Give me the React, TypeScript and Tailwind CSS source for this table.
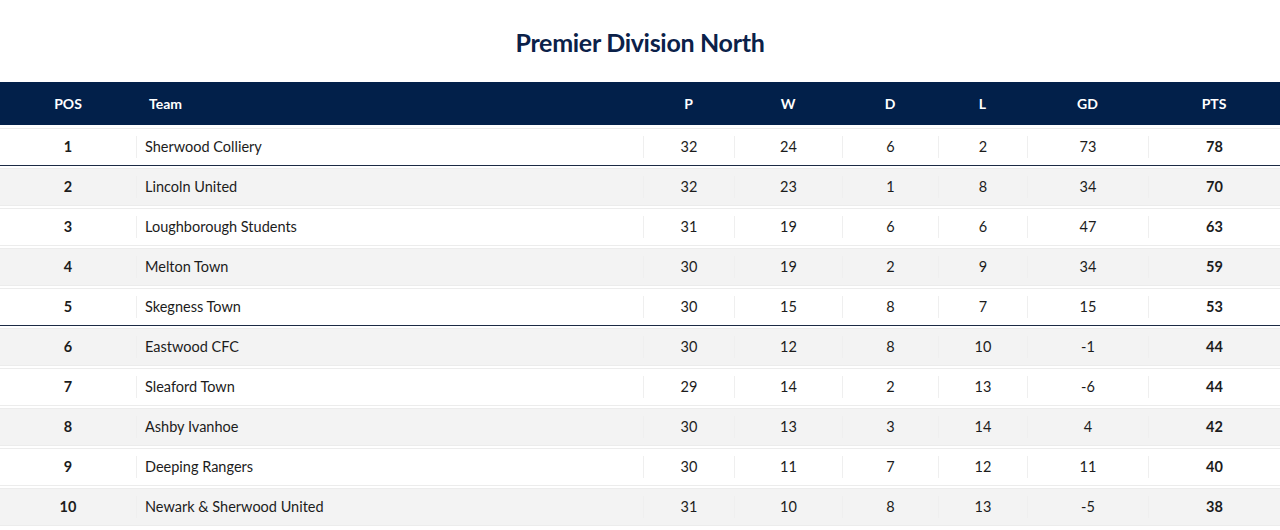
import React from "react";

const rows = [
  { pos: 1, team: "Sherwood Colliery", p: 32, w: 24, d: 6, l: 2, gd: 73, pts: 78, line: true },
  { pos: 2, team: "Lincoln United", p: 32, w: 23, d: 1, l: 8, gd: 34, pts: 70 },
  { pos: 3, team: "Loughborough Students", p: 31, w: 19, d: 6, l: 6, gd: 47, pts: 63 },
  { pos: 4, team: "Melton Town", p: 30, w: 19, d: 2, l: 9, gd: 34, pts: 59 },
  { pos: 5, team: "Skegness Town", p: 30, w: 15, d: 8, l: 7, gd: 15, pts: 53, line: true },
  { pos: 6, team: "Eastwood CFC", p: 30, w: 12, d: 8, l: 10, gd: -1, pts: 44 },
  { pos: 7, team: "Sleaford Town", p: 29, w: 14, d: 2, l: 13, gd: -6, pts: 44 },
  { pos: 8, team: "Ashby Ivanhoe", p: 30, w: 13, d: 3, l: 14, gd: 4, pts: 42 },
  { pos: 9, team: "Deeping Rangers", p: 30, w: 11, d: 7, l: 12, gd: 11, pts: 40 },
  { pos: 10, team: "Newark & Sherwood United", p: 31, w: 10, d: 8, l: 13, gd: -5, pts: 38 },
];

const cols = "grid grid-cols-[136px_507px_91px_108px_96px_89px_121px_132px]";

function Cell({ children, className = "" }: { children: React.ReactNode; className?: string }) {
  return (
    <div className={`h-[22px] self-center flex items-center justify-center border-l border-[#efefef] ${className}`}>
      {children}
    </div>
  );
}

export default function App() {
  return (
    <div className="w-[1280px] h-[530px] overflow-hidden bg-white font-['Lato',sans-serif] text-[#1c1c1c]">
      <h1 className="pt-[24px] h-[82px] text-center text-[25px] font-bold text-[#0b2149] tracking-[-0.3px]">
        Premier Division North
      </h1>
      <div className={`${cols} h-[43px] items-center bg-[#02204a] text-white text-[14px] font-bold`}>
        <div className="text-center">POS</div>
        <div className="pl-[13px]">Team</div>
        <div className="text-center">P</div>
        <div className="text-center">W</div>
        <div className="text-center">D</div>
        <div className="text-center">L</div>
        <div className="text-center">GD</div>
        <div className="text-center">PTS</div>
      </div>
      <div className="flex flex-col gap-[2px] pt-[3px]">
        {rows.map((r) => (
          <div
            key={r.pos}
            className={`${cols} h-[38px] border-t border-[#ececec] text-[14.5px] ${
              r.line ? "border-b border-b-[#1c2a44]" : "border-b border-b-[#ececec]"
            } ${r.pos % 2 === 0 ? "bg-[#f3f3f3]" : "bg-white"}`}
          >
            <div className="flex items-center justify-center font-bold">{r.pos}</div>
            <Cell className="!justify-start pl-[8px]">{r.team}</Cell>
            <Cell>{r.p}</Cell>
            <Cell>{r.w}</Cell>
            <Cell>{r.d}</Cell>
            <Cell>{r.l}</Cell>
            <Cell>{r.gd}</Cell>
            <Cell className="font-bold">{r.pts}</Cell>
          </div>
        ))}
      </div>
    </div>
  );
}
